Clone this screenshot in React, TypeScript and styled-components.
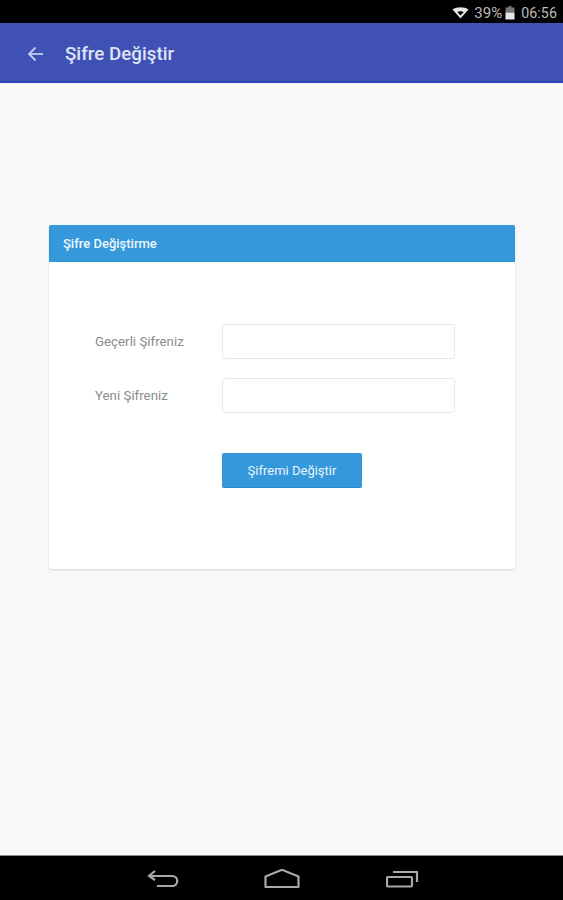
import React from "react";
import styled, { createGlobalStyle } from "styled-components";

const Global = createGlobalStyle`
  html, body { margin: 0; padding: 0; height: 100%; background: #000; }
  body { font-family: Roboto, "Noto Sans", sans-serif; }
  #root { height: 100%; }
`;

const Screen = styled.div`
  width: 563px;
  height: 900px;
  display: flex;
  flex-direction: column;
  background: #f8f8f8;
  overflow: hidden;
`;

const StatusBar = styled.div`
  height: 23px;
  flex: none;
  background: #000;
  color: #bcbcbc;
  display: flex;
  align-items: center;
  justify-content: flex-end;
  padding: 3px 6px 0 0;
  font-size: 14px;
  box-sizing: border-box;
`;

const StatusIcon = styled.svg<{ $gap?: number }>`
  display: block;
  flex: none;
  margin-left: ${(p) => p.$gap ?? 0}px;
`;

const Percent = styled.span`
  margin-left: 5px;
  font-size: 15px;
`;

const Clock = styled.span`
  margin-left: 6px;
  font-size: 14.2px;
  letter-spacing: 0.1px;
`;

const AppBar = styled.header`
  height: 60px;
  flex: none;
  box-sizing: border-box;
  background: #3f51b5;
  border-bottom: 2px solid #2f43b2;
  display: flex;
  align-items: center;
  padding: 4px 0 0 27px;
  color: #dfe3f5;
`;

const Title = styled.h1`
  margin: 0 0 0 21px;
  font-size: 18.8px;
  font-weight: 500;
  line-height: 24px;
`;

const Content = styled.main`
  flex: 1;
  padding: 142px 48px 0 49px;
`;

const Card = styled.section`
  height: 344px;
  display: flex;
  flex-direction: column;
  background: #fff;
  border-radius: 2px;
  box-shadow: 0 1px 2px rgba(0, 0, 0, 0.14), 0 0 3px rgba(0, 0, 0, 0.04);
`;

const CardHeader = styled.div`
  height: 37px;
  flex: none;
  box-sizing: border-box;
  background: #3498db;
  color: #eef7fd;
  border-radius: 2px 2px 0 0;
  font-size: 13px;
  font-weight: 500;
  line-height: 37px;
  padding-left: 14px;
`;

const Form = styled.form`
  display: flex;
  flex-direction: column;
  gap: 19px;
  padding: 62px 0 0 46px;
`;

const Row = styled.div`
  display: flex;
  align-items: center;
`;

const Label = styled.label`
  width: 127px;
  flex: none;
  color: #8a8a8a;
  font-size: 13.3px;
`;

const Field = styled.input`
  width: 233px;
  height: 35px;
  box-sizing: border-box;
  background: #fff;
  border: 1px solid #e8e8e8;
  border-radius: 3px;
  outline: none;
`;

const Submit = styled.button`
  width: 140px;
  height: 35px;
  margin: 21px 0 0 127px;
  background: #3498db;
  border: none;
  border-bottom: 1px solid #2d88c6;
  border-radius: 2px;
  color: #e8f4fc;
  font-family: inherit;
  font-size: 13px;
  padding: 0;
`;

const NavBar = styled.nav`
  height: 45px;
  flex: none;
  box-sizing: border-box;
  background: #000;
  border-top: 1px solid #8a8a8a;
  display: flex;
  align-items: center;
  padding: 2px 0 0 147px;
`;

const NavIcon = styled.svg<{ $gap?: number }>`
  display: block;
  flex: none;
  margin-left: ${(p) => p.$gap ?? 0}px;
  fill: none;
  stroke: #a8a8a8;
  stroke-width: 2.2;
`;

export default function App() {
  return (
    <Screen>
      <Global />
      <StatusBar>
        <StatusIcon width="17" height="12" viewBox="0 0 16 12">
          <path d="M0 2.5 C4 -0.6 12 -0.6 16 2.5 L8 11.5 Z" fill="#e6e6e6" />
          <path d="M4.8 5 C6.5 3.9 9.5 3.9 11.2 5 L8 8.6 Z" fill="#000" />
        </StatusIcon>
        <Percent>39%</Percent>
        <StatusIcon width="10" height="14" viewBox="0 0 10 14" $gap={3}>
          <rect x="3.5" y="0" width="3" height="2" fill="#777" />
          <rect x="0.5" y="1.5" width="9" height="5" fill="#777" />
          <rect x="0.5" y="6.5" width="9" height="7" fill="#e8e8e8" />
        </StatusIcon>
        <Clock>06:56</Clock>
      </StatusBar>
      <AppBar>
        <svg width="17" height="16" viewBox="0 0 17 16" fill="none" stroke="#c5cbea" strokeWidth="1.8">
          <path d="M16 8 H2" />
          <path d="M8.5 1.5 L2 8 L8.5 14.5" />
        </svg>
        <Title>Şifre Değiştir</Title>
      </AppBar>
      <Content>
        <Card>
          <CardHeader>Şifre Değiştirme</CardHeader>
          <Form>
            <Row>
              <Label>Geçerli Şifreniz</Label>
              <Field type="password" />
            </Row>
            <Row>
              <Label>Yeni Şifreniz</Label>
              <Field type="password" />
            </Row>
            <Submit type="button">Şifremi Değiştir</Submit>
          </Form>
        </Card>
      </Content>
      <NavBar>
        <NavIcon width="32" height="20" viewBox="0 0 32 20">
          <path d="M8 2 L2 7 L8 11" />
          <path d="M2 7 H25 C32 7 32 17 25 17 H10" />
        </NavIcon>
        <NavIcon width="36" height="20" viewBox="0 0 36 20" $gap={85}>
          <path d="M18 0.8 L34.5 7.5 V18 H1.5 V7.5 Z" strokeLinejoin="round" />
        </NavIcon>
        <NavIcon width="33" height="20" viewBox="0 0 33 20" $gap={86}>
          <rect x="1" y="8" width="25" height="9.5" rx="1" />
          <path d="M7 3 H31 V13" />
        </NavIcon>
      </NavBar>
    </Screen>
  );
}
